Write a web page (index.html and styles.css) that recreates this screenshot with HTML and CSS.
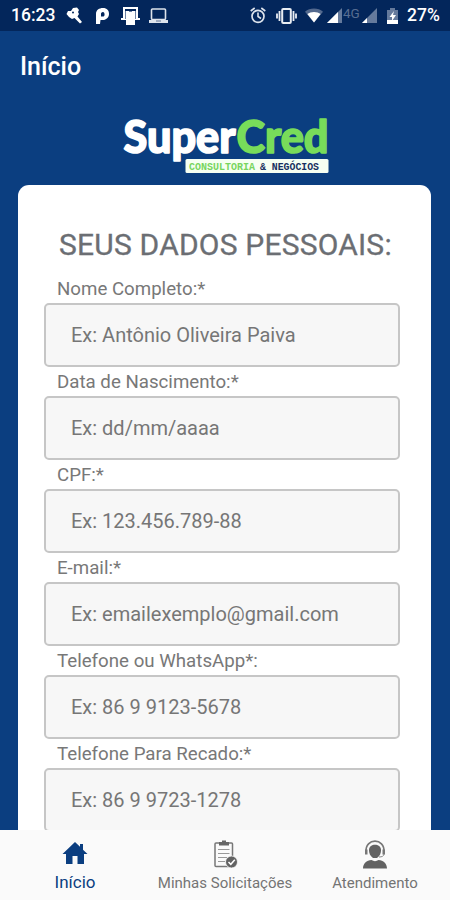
FILE: index.html
```html
<!DOCTYPE html>
<html lang="pt-BR">
<head>
  <meta charset="UTF-8">
  <meta name="viewport" content="width=device-width, initial-scale=1">
  <title>SuperCred</title>
  <link rel="stylesheet" href="styles.css">
</head>
<body>
  <div class="app">
    <div class="status-bar">
      <div class="status-left">
        <span class="clock">16:23</span>
        <svg class="icon-key" width="16" height="18" viewBox="0 0 16 18">
          <path d="M.5 7L2 4h3l2-3 4-.5L13 3l-1 2 1 2-1.500 2.500L16 15l-2 1.500L8.500 11 6 12 3 10z" fill="#fff"/>
          <circle cx="7" cy="5.500" r="1" fill="#03265b"/>
        </svg>
        <svg class="icon-p" width="13" height="16" viewBox="0 0 13 16">
          <path fill-rule="evenodd" d="M0 6C0 2 3 0 7 0s6 2.500 6 6-3 6-6 6H4.500l-.5 4H0zM5 6v2.500h2.500C9 8.500 9 4 7 4 5.500 4 5 5 5 6z" fill="#fff"/>
        </svg>
        <svg class="icon-devices" width="19" height="18" viewBox="0 0 19 18">
          <path d="M3 11V1h13v10M0 12h5M14 12h5" fill="none" stroke="#fff" stroke-width="2"/>
          <path d="M5 4h9v14H5z" fill="#fff"/>
          <path d="M4.500 12V4M14.500 12V4M8 4.500h3" stroke="#6e83a5" fill="none"/>
        </svg>
        <svg class="icon-laptop" width="19" height="15" viewBox="0 0 19 15">
          <rect x="2.500" y="1" width="14" height="10.500" rx="1" fill="none" stroke="#dde3ec" stroke-width="1.600"/>
          <path d="M0 12h19v3H0z" fill="#dde3ec"/>
          <path d="M7 13h5" stroke="#5d7193"/>
        </svg>
      </div>
      <div class="status-right">
        <svg class="icon-alarm" width="16" height="17" viewBox="0 0 16 17">
          <circle cx="8" cy="9.300" r="6" fill="none" stroke="#dde3ec" stroke-width="1.700"/>
          <path d="M.7 4l4-3M15.300 4l-4-3M8 5.500v4l3 2" fill="none" stroke="#dde3ec" stroke-width="1.600"/>
        </svg>
        <svg class="icon-vibrate" width="21" height="16" viewBox="0 0 21 16">
          <rect x="6.200" y="1" width="8.600" height="14" rx="1" fill="none" stroke="#e9edf3" stroke-width="2"/>
          <path d="M3.500 3v10M17.500 3v10M1 5.500v5M20 5.500v5" stroke="#e9edf3" stroke-width="1.800"/>
        </svg>
        <svg class="icon-wifi" width="18" height="15" viewBox="0 0 19 15">
          <path d="M0 3.500C5-1 14-1 19 3.500L9.500 15z" fill="#53698e"/>
          <path d="M2.500 6C6 3 13 3 16.500 6l-7 9z" fill="#fff"/>
        </svg>
        <svg class="icon-signal" width="15" height="15" viewBox="0 0 15 15">
          <path d="M15 0v15H0z" fill="#657a9c"/>
          <path d="M11 4v11H0z" fill="#fff"/>
        </svg>
        <span class="network">4G</span>
        <svg class="icon-signal-low" width="15" height="15" viewBox="0 0 15 15">
          <path d="M15 0v15H0z" fill="#657a9c"/>
          <path d="M5 10v5H0z" fill="#fff"/>
        </svg>
        <svg class="icon-battery" width="11" height="16" viewBox="0 0 11 16">
          <path d="M3 0h5v2h3v14H0V2h3z" fill="#657a9c"/>
          <path d="M0 12h11v4H0z" fill="#fff"/>
          <path d="M7 3L2.500 9H5v4l4-6H6z" fill="#fff"/>
        </svg>
        <span class="percent">27%</span>
      </div>
    </div>

    <header>
      <h1>Início</h1>
    </header>

    <main>
      <svg class="logo" width="220" height="70" viewBox="0 -12 220 70">
        <text class="logo-super" x="2.500" y="35.500" textLength="112" lengthAdjust="spacingAndGlyphs">Super</text>
        <text class="logo-cred" x="115.500" y="35.500" textLength="92" lengthAdjust="spacingAndGlyphs">Cred</text>
        <rect x="64.500" y="42" width="143" height="14" rx="1.500" fill="#f6fff2"/>
        <text class="logo-tag green" x="68" y="52.500" textLength="66" lengthAdjust="spacingAndGlyphs">CONSULTORIA</text>
        <text class="logo-tag" x="139" y="52.500" textLength="59" lengthAdjust="spacingAndGlyphs">&amp; NEGÓCIOS</text>
      </svg>

      <form class="card">
        <h2>SEUS DADOS PESSOAIS:</h2>
        <label for="nome">Nome Completo:*</label>
        <input id="nome" type="text" placeholder="Ex: Antônio Oliveira Paiva">
        <label for="nascimento">Data de Nascimento:*</label>
        <input id="nascimento" type="text" placeholder="Ex: dd/mm/aaaa">
        <label for="cpf">CPF:*</label>
        <input id="cpf" type="text" placeholder="Ex: 123.456.789-88">
        <label for="email">E-mail:*</label>
        <input id="email" type="text" placeholder="Ex: emailexemplo@gmail.com">
        <label for="telefone">Telefone ou WhatsApp*:</label>
        <input id="telefone" type="text" placeholder="Ex: 86 9 9123-5678">
        <label for="recado">Telefone Para Recado:*</label>
        <input id="recado" type="text" placeholder="Ex: 86 9 9723-1278">
      </form>
    </main>

    <nav>
      <a class="tab active">
        <svg width="26" height="30" viewBox="0 0 26 30">
          <path d="M13 3L.5 15H4v10h6.500v-8h5v8H22V15h3.500L21 10.700V5h-3v2.800z" fill="#0b3e80"/>
        </svg>
        <span>Início</span>
      </a>
      <a class="tab">
        <svg width="26" height="30" viewBox="0 0 26 30">
          <rect x="3" y="4" width="17.500" height="23.500" rx="1" fill="#fafafa" stroke="#777" stroke-width="1.500"/>
          <path d="M7 3h3V1.500h4V3h3v3.500H7z" fill="#666"/>
          <path d="M6 10.500h11.500M6 14.500h11.500M6 18.500h9M6 22.500h7" stroke="#999" stroke-width="1.200"/>
          <circle cx="19.500" cy="23" r="6" fill="#626262" stroke="#fafafa" stroke-width=".8"/>
          <path d="M16.500 23l2.300 2.300 4-4.500" fill="none" stroke="#fff" stroke-width="1.500"/>
        </svg>
        <span>Minhas Solicitações</span>
      </a>
      <a class="tab">
        <svg width="26" height="30" viewBox="0 0 26 30">
          <path d="M4 13C3-1.500 23-1.500 22 13" fill="none" stroke="#777" stroke-width="1.600"/>
          <path d="M3 10.500h2.500v5H3zM20.500 10.500H23v5h-2.500z" fill="#777"/>
          <path d="M7 11c0-7 12-7 12 0 0 3-1 6-4 8h-4c-3-2-4-5-4-8z" fill="#626262"/>
          <path d="M22 15c0 2-2 3-5 3" fill="none" stroke="#888"/>
          <path d="M1 29.500c0-5 3.500-8 8.500-8.500 2 1.500 5 1.500 7 0 5 .5 8.500 3.500 8.500 8.500z" fill="#626262"/>
        </svg>
        <span>Atendimento</span>
      </a>
    </nav>
  </div>
</body>
</html>
```
FILE: styles.css
```css
* {
  box-sizing: border-box;
}
body {
  margin: 0;
  font-family: Roboto, sans-serif;
  background-color: #0b3e80;
}
.app {
  display: flex;
  flex-direction: column;
  height: 900px;
  overflow: hidden;
}
.status-bar {
  display: flex;
  flex: none;
  justify-content: space-between;
  height: 31px;
  padding: 0 10px 0 11px;
  background-color: #03265b;
  color: #fff;
}
.status-left,
.status-right {
  display: flex;
  align-items: center;
}
svg {
  display: block;
  flex: none;
}
.clock,
.percent {
  font-size: 17.5px;
  font-weight: 500;
  line-height: 31px;
}
.clock {
  width: 55px;
}
.icon-p {
  margin-left: 14px;
}
.icon-devices {
  margin-left: 12px;
}
.icon-laptop {
  margin-left: 9px;
}
.icon-vibrate {
  margin-left: 10px;
}
.icon-wifi {
  margin-left: 8px;
}
.icon-signal {
  margin-left: 4px;
}
.network {
  width: 19px;
  margin-left: 1px;
  margin-top: -6px;
  font-size: 13.5px;
  color: #576d91;
}
.icon-battery {
  margin-left: 10px;
}
.percent {
  width: 33px;
  margin-left: 9px;
}
header {
  flex: none;
  height: 73px;
  padding: 21px 20px 0;
}
header h1 {
  margin: 0;
  font-size: 25px;
  font-weight: 500;
  line-height: 30px;
  color: #fff;
}
main {
  flex: 1;
  min-height: 0;
  padding: 1px 18px 0;
  overflow: hidden;
}
.logo {
  margin: 0 auto 10px 103px;
}
.logo-super,
.logo-cred {
  font-family: Lato, sans-serif;
  font-size: 45px;
  font-weight: 900;
  fill: #fff;
  stroke: #fff;
  stroke-width: 1.6px;
  stroke-linejoin: round;
}
.logo-cred {
  fill: #78dc5a;
  stroke: #78dc5a;
}
.logo-tag {
  font-family: "Liberation Mono", monospace;
  font-size: 10px;
  font-weight: bold;
  fill: #17305f;
}
.logo-tag.green {
  fill: #78d55f;
}
.card {
  display: flex;
  flex-direction: column;
  margin-right: 1px;
  padding: 43px 31px 40px 26px;
  background-color: #fff;
  border-radius: 11px;
}
.card h2 {
  margin: 0 0 14px 15px;
  font-size: 30px;
  font-weight: 400;
  line-height: 34px;
  letter-spacing: 0.2px;
  color: #6b6e73;
  white-space: nowrap;
  -webkit-text-stroke: 0.3px #6b6e73;
}
.card label {
  height: 29px;
  padding: 3px 0 0 13px;
  font-size: 18.7px;
  line-height: 25px;
  color: #787878;
}
.card h2 + label {
  height: 27px;
  padding-top: 1px;
}
.card input {
  flex: none;
  width: 356px;
  height: 64px;
  padding: 0 25px;
  font-family: Roboto, sans-serif;
  font-size: 20px;
  background-color: #f7f7f7;
  border: 2px solid #c6c6c6;
  border-radius: 5px;
}
.card input::placeholder {
  color: #767676;
}
nav {
  display: grid;
  flex: none;
  grid-template-columns: repeat(3, 1fr);
  height: 70px;
  background-color: #fafafa;
}
.tab {
  display: flex;
  flex-direction: column;
  align-items: center;
  padding-top: 9px;
  font-size: 15px;
  color: #747474;
}
.tab span {
  margin-top: 4px;
  line-height: 20px;
  white-space: nowrap;
}
.tab.active span {
  margin-top: 3px;
  font-size: 17px;
  color: #0b3e80;
}
```
